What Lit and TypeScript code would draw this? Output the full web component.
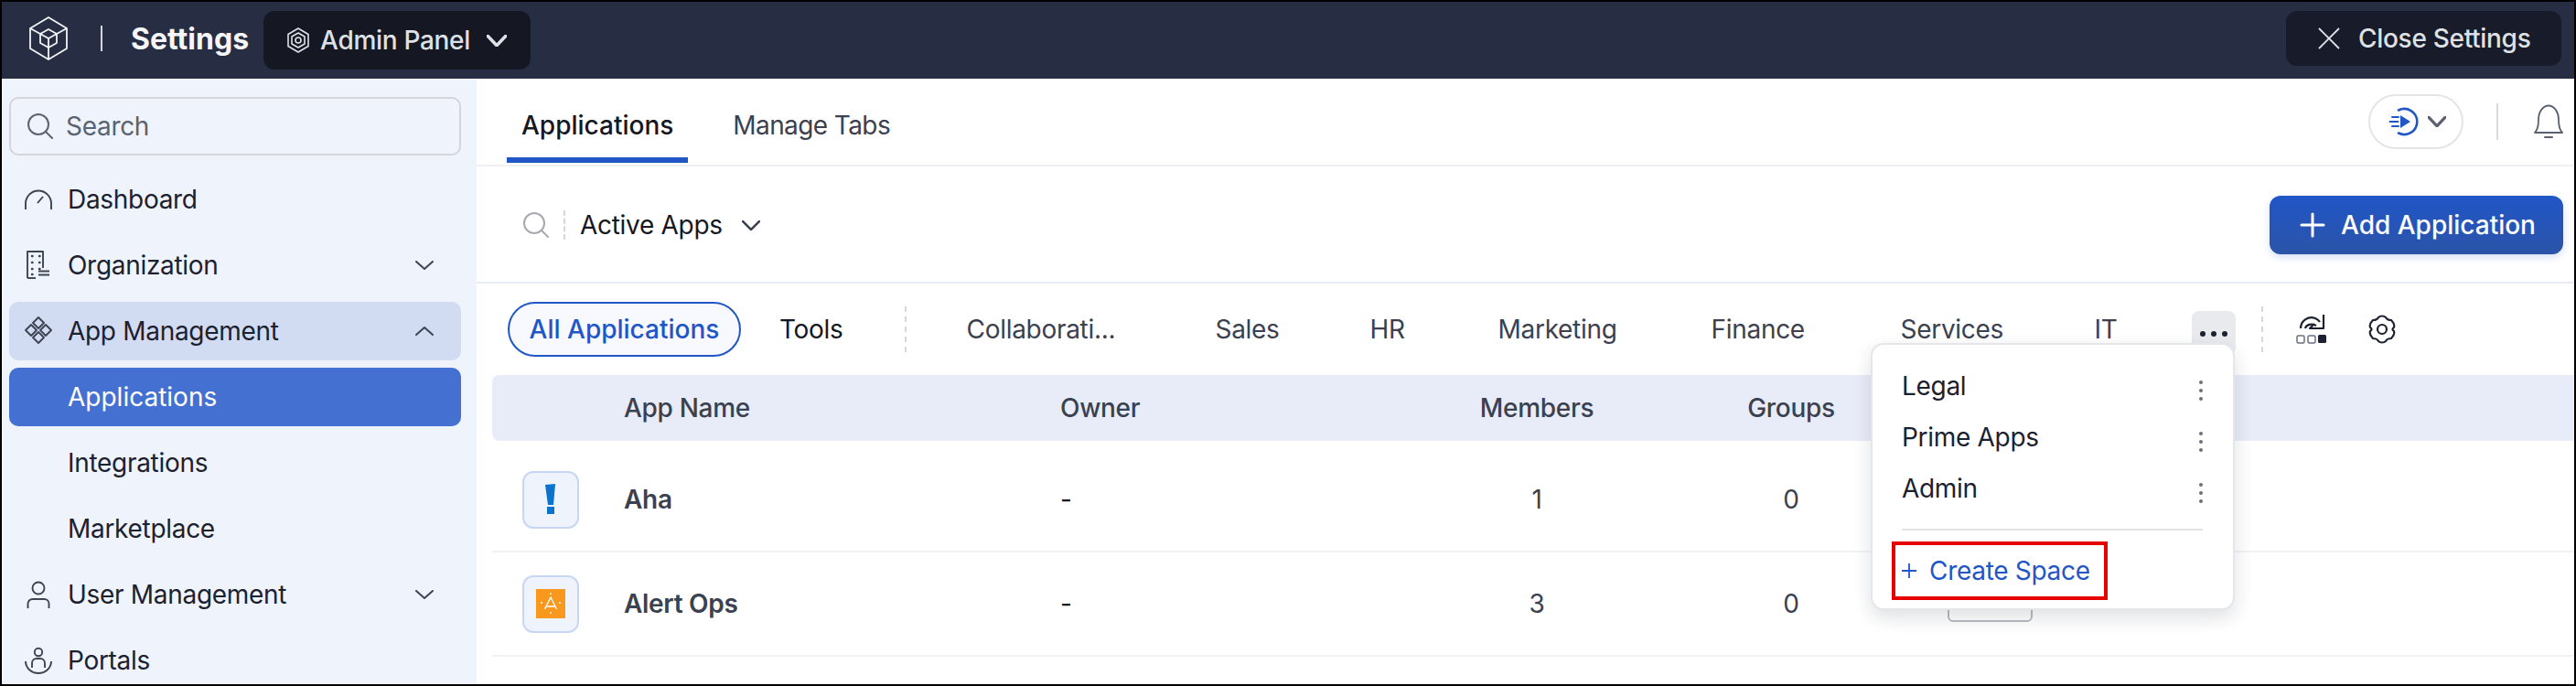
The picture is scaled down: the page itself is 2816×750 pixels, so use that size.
import { LitElement, html, css, svg } from 'lit';
import { customElement } from 'lit/decorators.js';

const chevronDown = (w = 20, h = 10, sw = 2) => html`
  <svg width=${w} height=${h} viewBox="0 0 20 10" fill="none" stroke="currentColor" stroke-width=${sw} stroke-linecap="round" stroke-linejoin="round" preserveAspectRatio="none">
    <path d="M1 1l9 8 9-8" />
  </svg>
`;

const chevronUp = html`
  <svg width="20" height="10" viewBox="0 0 20 10" fill="none" stroke="currentColor" stroke-width="2" stroke-linecap="round" stroke-linejoin="round">
    <path d="M1 9l9-8 9 8" />
  </svg>
`;

const searchIcon = html`
  <svg width="28" height="28" viewBox="0 0 28 28" fill="none" stroke="currentColor" stroke-width="2" stroke-linecap="round">
    <circle cx="12" cy="12" r="11" />
    <path d="M20 20l7 7" />
  </svg>
`;

const navIcons: Record<string, unknown> = {
  dashboard: svg`
    <path d="M1 27v-6.500a14 14 0 0 1 28 0v6.500" />
    <path d="M14 20l6-7" />
  `,
  organization: svg`
    <path d="M3 30V1h17v18" />
    <path d="M3 30h9" />
    <path d="M15 22.500h12M15 26.500h12" />
    <path d="M8 6h.5M16 6h.5M8 13h.5M16 13h.5M8 20h.5M16 20h.5M8 26h.5" stroke-width="2.400" stroke-linecap="round" />
  `,
  apps: svg`
    <path d="M15 1l6 6-6 6-6-6z" />
    <path d="M7 9l6 6-6 6-6-6z" />
    <path d="M23 9l6 6-6 6-6-6z" />
    <path d="M15 17l6 6-6 6-6-6z" />
  `,
  user: svg`
    <circle cx="15" cy="9" r="6.500" />
    <path d="M3.500 31v-5a5 5 0 0 1 5-5h13a5 5 0 0 1 5 5v5" />
  `,
  portals: svg`
    <circle cx="15" cy="7" r="4.200" />
    <path d="M8 24v-5a5 5 0 0 1 5-5h4a5 5 0 0 1 5 5v5" />
    <path d="M1 17a14 13 0 0 0 28 0" />
  `,
};

const navIcon = (name: string) => html`
  <svg width="32" height="32" viewBox="0 0 30 32" fill="none" stroke="#3d4452" stroke-width="1.900" stroke-linejoin="round">
    ${navIcons[name]}
  </svg>
`;

interface NavItem {
  label: string;
  icon?: string;
  chevron?: 'up' | 'down';
  state?: string;
}

const NAV: NavItem[] = [
  { label: 'Dashboard', icon: 'dashboard' },
  { label: 'Organization', icon: 'organization', chevron: 'down' },
  { label: 'App Management', icon: 'apps', chevron: 'up', state: 'open' },
  { label: 'Applications', state: 'active' },
  { label: 'Integrations' },
  { label: 'Marketplace' },
  { label: 'User Management', icon: 'user', chevron: 'down' },
  { label: 'Portals', icon: 'portals' },
];

const SPACE_TABS = ['Collaborati...', 'Sales', 'HR', 'Marketing', 'Finance', 'Services', 'IT'];
const MENU_SPACES = ['Legal', 'Prime Apps', 'Admin'];

const ahaLogo = html`
  <svg width="12" height="34" viewBox="0 0 12 34">
    <path d="M0 1l11-1-2 23H3z" fill="#0a73cc" />
    <rect x="2" y="25" width="8" height="8" fill="#0a73cc" />
  </svg>
`;

const alertLogo = html`
  <svg width="32" height="32" viewBox="0 0 32 32">
    <rect width="32" height="32" fill="#f8981d" />
    <path d="M9.500 22L16 9l6.500 13M11.500 19h9" fill="none" stroke="#fff" stroke-width="1.400" />
    <path d="M16 4v2M16 25v2M5 15h2M25 15h2" stroke="#fff" stroke-width="1.400" />
  </svg>
`;

const ROWS = [
  { name: 'Aha', logo: ahaLogo, owner: '-', members: '1', groups: '0' },
  { name: 'Alert Ops', logo: alertLogo, owner: '-', members: '3', groups: '0' },
];

@customElement('app-root')
export class AppRoot extends LitElement {
  static styles = css`
    :host {
      display: block;
      width: 2816px;
      height: 750px;
      box-sizing: border-box;
      border: 2px solid #000;
      overflow: hidden;
      background: #fff;
      font-family: Inter, 'Noto Sans', sans-serif;
      font-size: 28px;
      letter-spacing: -0.3px;
      color: #1c2130;
    }

    * {
      box-sizing: border-box;
    }

    svg {
      display: block;
      flex: none;
    }

    .topbar {
      height: 84px;
      background: #272d42;
      display: flex;
      align-items: center;
      padding: 0 14px 4px 29px;
    }

    .divider {
      width: 2px;
      height: 28px;
      margin: 0 31px 0 35px;
      background: #d5d7dd;
    }

    .title {
      font-size: 32px;
      font-weight: 700;
      letter-spacing: 0;
      color: #f5f6f9;
      margin-right: 16px;
    }

    .panel {
      height: 64px;
      width: 292px;
      margin-top: 4px;
      display: flex;
      align-items: center;
      padding-left: 25px;
      border-radius: 12px;
      background: #151823;
      color: #dfe1e6;
    }

    .panel-label {
      margin: 0 18px 0 11px;
      font-weight: 500;
    }

    .close {
      margin-left: auto;
      height: 60px;
      width: 301px;
      display: flex;
      align-items: center;
      gap: 20px;
      padding-left: 35px;
      border-radius: 12px;
      background: #181c2a;
      color: #dfe1e6;
      font-weight: 500;
    }

    .body {
      display: flex;
      height: 662px;
    }

    .sidebar {
      width: 519px;
      flex: none;
      padding: 20px 17px 0 8px;
      background: #eff3fc;
    }

    .search {
      height: 64px;
      display: flex;
      align-items: center;
      gap: 14px;
      padding-left: 18px;
      margin-bottom: 16px;
      border: 2px solid #d4d6db;
      border-radius: 10px;
      color: #5c6370;
    }

    .nav {
      display: flex;
      flex-direction: column;
      gap: 8px;
    }

    .nav-item {
      height: 64px;
      display: flex;
      align-items: center;
      padding: 0 30px 0 64px;
      border-radius: 10px;
    }

    .nav-item.icon {
      padding: 0 30px 0 16px;
    }

    .nav-item.icon > svg {
      margin-right: 16px;
    }

    .nav-item.open {
      background: #d1dcf3;
    }

    .nav-item.active {
      background: #4471d1;
      color: #fff;
      letter-spacing: 0;
    }

    .nav-chevron {
      margin-left: auto;
      color: #3d4452;
    }

    .main {
      flex: 1;
      min-width: 0;
      position: relative;
    }

    .head {
      height: 96px;
      display: flex;
      justify-content: space-between;
      align-items: center;
      padding: 0 11px 0 33px;
      border-bottom: 2px solid #eef0f5;
    }

    .tabs {
      display: flex;
      gap: 33px;
      align-self: flex-start;
    }

    .tab {
      height: 92px;
      padding: 34px 16px 0;
      line-height: 34px;
      border-bottom: 6px solid transparent;
      color: #3b4150;
      letter-spacing: -0.6px;
    }

    .tab.on {
      color: #15181f;
      font-weight: 500;
      letter-spacing: 0;
      border-bottom-color: #2156c7;
    }

    .head-actions {
      display: flex;
      align-items: center;
    }

    .guide {
      width: 104px;
      height: 60px;
      display: flex;
      align-items: center;
      gap: 9px;
      padding-left: 20px;
      border: 2px solid #e4e5e9;
      border-radius: 30px;
      color: #5b6170;
    }

    .head-sep {
      width: 2px;
      height: 40px;
      margin: 0 38px 0 36px;
      background: #d8dade;
    }

    .filter {
      height: 128px;
      display: flex;
      align-items: center;
      padding: 2px 12px 0 51px;
      border-bottom: 2px solid #e8ecf6;
      color: #15181f;
    }

    .filter-search {
      color: #a6a9b0;
    }

    .dash {
      width: 0;
      border-left: 2px dashed #d5d7dc;
    }

    .filter .dash {
      height: 32px;
      margin: 0 16px 0 16px;
    }

    .filter-chevron {
      margin-left: 21px;
      color: #3b4150;
    }

    .add {
      margin-left: auto;
      width: 321px;
      height: 64px;
      display: flex;
      align-items: center;
      gap: 17px;
      padding-left: 33px;
      border-radius: 12px;
      background: linear-gradient(#2156c7, #2b54a8);
      box-shadow: 0 3px 8px rgba(33, 86, 199, 0.2);
      color: #fff;
      font-weight: 500;
      letter-spacing: 0;
    }

    .spaces {
      height: 60px;
      margin: 20px 0;
      display: flex;
      align-items: center;
      padding-left: 34px;
      white-space: nowrap;
    }

    .all {
      height: 60px;
      width: 255px;
      display: flex;
      align-items: center;
      justify-content: center;
      border: 2px solid #2156c7;
      border-radius: 30px;
      background: #f7f9fe;
      color: #2156c7;
      font-weight: 500;
      letter-spacing: 0;
    }

    .tools {
      margin-left: 42px;
      color: #15181f;
    }

    .spaces .dash {
      height: 50px;
      margin: 0 66px 0 67px;
    }

    .space-tabs {
      display: grid;
      grid-template-columns: 272px 169px 140px 233px 207px 212px 106px;
      color: #3b4150;
    }

    .more {
      width: 48px;
      height: 48px;
      align-self: flex-start;
      padding-top: 22px;
      display: flex;
      justify-content: center;
      gap: 6px;
      margin-top: 10px;
      border-radius: 8px;
      background: #e9eaee;
    }

    .more i {
      width: 6px;
      height: 6px;
      border-radius: 50%;
      background: #1c2130;
    }

    .spaces .dash.tail {
      margin: 0 36px 0 28px;
    }

    .gear {
      margin-left: 45px;
      color: #1c2130;
    }

    .grid {
      display: grid;
      grid-template-columns: 144px 477px 396px 250px 306px 1fr;
      align-items: center;
      margin-left: 17px;
    }

    .thead {
      height: 72px;
      border-radius: 8px 0 0 8px;
      background: #e8ecf8;
      color: #3a4150;
      font-weight: 500;
    }

    .num {
      text-align: center;
    }

    .rows {
      margin-top: 8px;
    }

    .row {
      height: 114px;
      border-bottom: 2px solid #f1f2f4;
      color: #3a4150;
    }

    .logo {
      width: 62px;
      height: 63px;
      margin-left: 33px;
      display: flex;
      align-items: center;
      justify-content: center;
      border: 2px solid #c7d6f2;
      border-radius: 12px;
      background: #eff3fc;
    }

    .name {
      font-weight: 600;
    }

    .owner {
      color: #15181f;
    }

    .row-btn {
      width: 93px;
      height: 40px;
      margin-left: 18px;
      border: 2px solid #b9bbc2;
      border-radius: 6px;
    }

    .menu {
      position: absolute;
      left: 1524px;
      top: 289px;
      width: 398px;
      height: 292px;
      padding: 17px 33px 0 32px;
      border: 2px solid #e5e6ea;
      border-radius: 14px;
      background: #fff;
      box-shadow: 0 8px 20px rgba(30, 35, 50, 0.14);
    }

    .menu-item {
      height: 56px;
      display: flex;
      align-items: center;
      justify-content: space-between;
    }

    .kebab {
      display: flex;
      flex-direction: column;
      gap: 5px;
      margin: 10px 0 0 0;
    }

    .kebab i {
      width: 4px;
      height: 4px;
      border-radius: 50%;
      background: #6a7080;
    }

    .menu-sep {
      height: 2px;
      margin-top: 16px;
      background: #e2e3e7;
    }

    .create {
      position: absolute;
      left: 21px;
      top: 215px;
      width: 236px;
      height: 64px;
      display: flex;
      align-items: center;
      gap: 14px;
      padding-left: 7px;
      border: 4px solid #e60000;
      color: #2156c7;
    }
  `;

  render() {
    return html`
      <div class="topbar">
        <svg width="44" height="48" viewBox="0 0 44 48" fill="none" stroke="#f2f3f6" stroke-width="1.800" stroke-linejoin="round">
          <path d="M22 1l20 12v22L22 47 2 35V13z" />
          <path d="M13 19l9-5 9 5v10l-9 5-9-5z" />
          <path d="M13 19l9 5 9-5M22 24v23M2 13l11 6M42 13l-11 6" />
        </svg>
        <div class="divider"></div>
        <div class="title">Settings</div>
        <div class="panel">
          <svg width="26" height="28" viewBox="0 0 26 28" fill="none" stroke="#dfe1e6" stroke-width="1.600" stroke-linejoin="round">
            <path d="M13 1l11 6.500v13L13 27 2 20.500v-13z" />
            <path d="M13 6l7 4v8l-7 4-7-4v-8z" />
            <circle cx="13" cy="14" r="3" />
          </svg>
          <span class="panel-label">Admin Panel</span>
          ${chevronDown(22, 13, 3)}
        </div>
        <div class="close">
          <svg width="24" height="24" viewBox="0 0 24 24" stroke="#dfe1e6" stroke-width="1.800"><path d="M1 1l22 22M23 1L1 23" /></svg>
          <span>Close Settings</span>
        </div>
      </div>
      <div class="body">
        <aside class="sidebar">
          <div class="search">${searchIcon}<span>Search</span></div>
          <nav class="nav">
            ${NAV.map(
              item => html`
                <div class="nav-item ${item.icon ? 'icon' : ''} ${item.state ?? ''}">
                  ${item.icon ? navIcon(item.icon) : ''}
                  <span>${item.label}</span>
                  ${item.chevron
                    ? html`<span class="nav-chevron">${item.chevron === 'up' ? chevronUp : chevronDown()}</span>`
                    : ''}
                </div>
              `
            )}
          </nav>
        </aside>
        <main class="main">
          <div class="head">
            <div class="tabs">
              <div class="tab on">Applications</div>
              <div class="tab">Manage Tabs</div>
            </div>
            <div class="head-actions">
              <div class="guide">
                <svg width="34" height="34" viewBox="0 0 34 34" fill="none" stroke="#2156c7" stroke-width="2.600" stroke-linecap="round">
                  <path d="M11 4.500a14 14 0 1 1 0 25" />
                  <path d="M13 10l11 7-11 7z" fill="#2156c7" stroke="none" />
                  <path d="M4 12h7M1.500 17h9M4 22h7" stroke-width="2" />
                </svg>
                ${chevronDown(20, 12, 3)}
              </div>
              <div class="head-sep"></div>
              <svg width="34" height="38" viewBox="0 0 34 38" fill="none" stroke="#5b6170" stroke-width="1.800" stroke-linejoin="round" stroke-linecap="round">
                <path d="M2 31c3-3 4-7 4-14C6 8 11 1.500 17 1.500S28 8 28 17c0 7 1 11 4 14z" />
                <path d="M13 36h8" stroke-width="2" />
              </svg>
            </div>
          </div>
          <div class="filter">
            <span class="filter-search">${searchIcon}</span>
            <span class="dash"></span>
            <span>Active Apps</span>
            <span class="filter-chevron">${chevronDown(20, 11, 2.4)}</span>
            <div class="add">
              <svg width="28" height="28" viewBox="0 0 28 28" stroke="#fff" stroke-width="3" stroke-linecap="round"><path d="M14 2v24M2 14h24" /></svg>
              <span>Add Application</span>
            </div>
          </div>
          <div class="spaces">
            <div class="all">All Applications</div>
            <div class="tools">Tools</div>
            <span class="dash"></span>
            <div class="space-tabs">${SPACE_TABS.map(t => html`<span>${t}</span>`)}</div>
            <div class="more"><i></i><i></i><i></i></div>
            <span class="dash tail"></span>
            <svg width="34" height="34" viewBox="0 0 34 34" fill="none" stroke="#1c2130" stroke-width="2.200" stroke-linejoin="round">
              <path d="M5 16c0-8 8-14 16-11 2 1 4 2 5 4" />
              <path d="M30 1v15H15l5-5" />
              <path d="M10 16c1-4 7-6 12-3" />
              <rect x="1" y="24" width="8" height="8" rx="1.500" stroke-width="1.500" stroke="#6a7080" />
              <rect x="13" y="24" width="8" height="8" rx="1.500" stroke-width="1.500" stroke="#6a7080" />
              <rect x="24" y="23" width="9" height="9" rx="1.500" fill="#1c2130" stroke="none" />
            </svg>
            <span class="gear">
              <svg width="30" height="32" viewBox="0 0 30 32" fill="none" stroke="currentColor" stroke-width="2.200" stroke-linejoin="round">
                <circle cx="15" cy="16" r="5" />
                <path d="M11 3c2-2 6-2 8 0 1 2 3 3 6 3 2 2 4 5 3 8-2 1-2 3 0 4 1 3-1 6-3 8-3 0-5 1-6 3-2 2-6 2-8 0-1-2-3-3-6-3-2-2-4-5-3-8 2-1 2-3 0-4-1-3 1-6 3-8 3 0 5-1 6-3z" />
              </svg>
            </span>
          </div>
          <div class="grid thead">
            <span></span>
            <span>App Name</span>
            <span>Owner</span>
            <span class="num">Members</span>
            <span class="num">Groups</span>
            <span></span>
          </div>
          <div class="rows">
            ${ROWS.map(
              row => html`
                <div class="grid row">
                  <div class="logo">${row.logo}</div>
                  <span class="name">${row.name}</span>
                  <span class="owner">${row.owner}</span>
                  <span class="num">${row.members}</span>
                  <span class="num">${row.groups}</span>
                  <div class="row-btn"></div>
                </div>
              `
            )}
          </div>
          <div class="menu">
            ${MENU_SPACES.map(
              s => html`
                <div class="menu-item">
                  <span>${s}</span>
                  <span class="kebab"><i></i><i></i><i></i></span>
                </div>
              `
            )}
            <div class="menu-sep"></div>
            <div class="create">
              <svg width="16" height="16" viewBox="0 0 16 16" stroke="#2156c7" stroke-width="1.800"><path d="M8 0v16M0 8h16" /></svg>
              <span>Create Space</span>
            </div>
          </div>
        </main>
      </div>
    `;
  }
}
